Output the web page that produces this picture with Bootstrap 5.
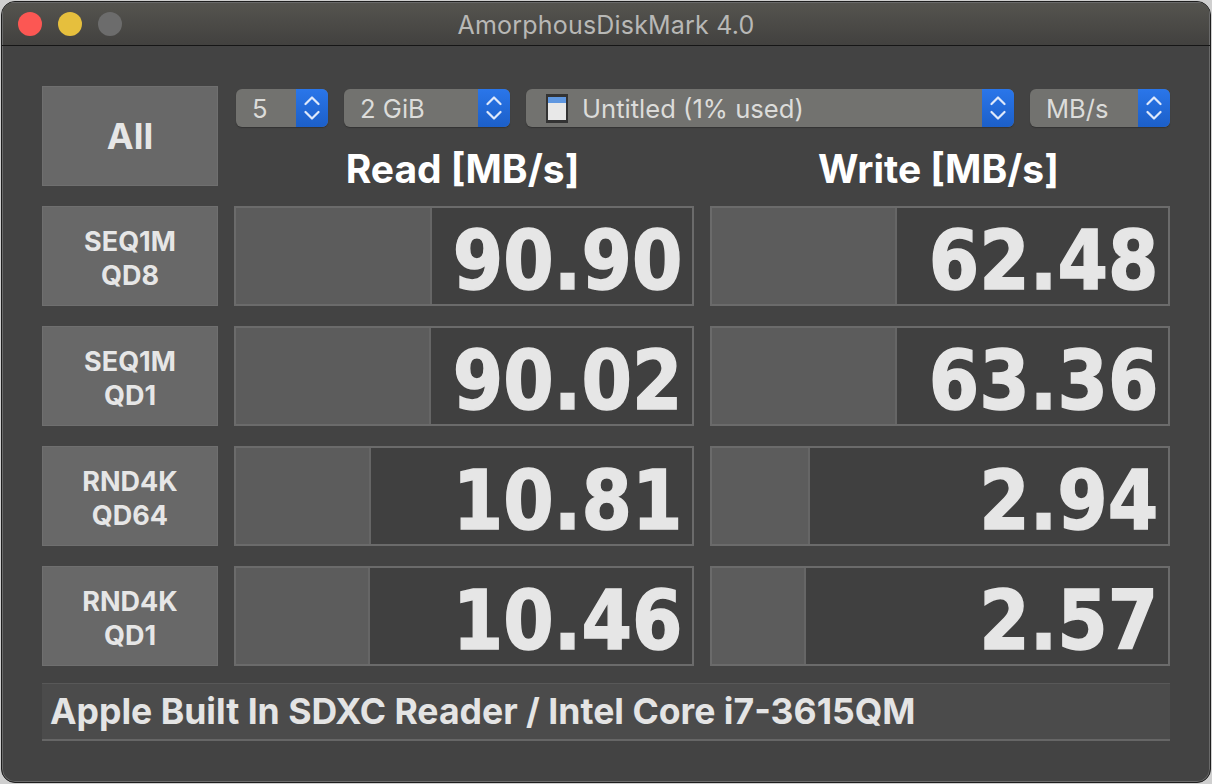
<!DOCTYPE html>
<html lang="en">
<head>
  <meta charset="UTF-8" />
  <title>AmorphousDiskMark 4.0</title>
  <meta name="viewport" content="width=device-width, initial-scale=1" />
  <link href="https://cdn.jsdelivr.net/npm/bootstrap@5.3.0/dist/css/bootstrap.min.css" rel="stylesheet" />
  <style>
    body {
      background: #cfcfcf;
      margin: 0;
      height: 784px;
      padding: 1px;
      font-family: Inter, "Liberation Sans", sans-serif;
      overflow: hidden;
    }
    .win {
      height: 782px;
      background: #434343;
      border: 1px solid #1e1e1e;
      border-radius: 14px;
      box-shadow: inset 0 0 0 1px #6a6a6a;
      overflow: hidden;
    }
    .titlebar {
      height: 44px;
      background: linear-gradient(#55544f, #42413f);
      border-bottom: 1px solid #161616;
      box-shadow: inset 0 1px 0 #6a6a6a, inset 1px 0 0 #6a6a6a, inset -1px 0 0 #6a6a6a;
      padding-left: 16px;
    }
    .dot {
      width: 24px;
      height: 24px;
      border-radius: 50%;
    }
    .dots { gap: 16px; }
    .title-text {
      color: #b8b8b6;
      font-size: 25px;
      letter-spacing: 0.2px;
      padding-top: 3px;
    }
    .content {
      padding: 40px 40px 0 40px;
    }
    .side-col { width: 176px; }
    .head-col { width: 936px; }
    .cellbtn {
      background: #686868;
      border: 1px solid #6f6f6f;
      color: #e6e6e6;
      font-weight: 700;
      line-height: 34px;
      font-size: 27px;
      text-align: center;
      padding-top: 5px;
    }
    .all-btn {
      height: 100px;
      font-size: 36px;
      padding-top: 0;
    }
    .pick {
      height: 38px;
      background: #72726f;
      border-radius: 6px;
      color: #dcdcda;
      font-size: 25.6px;
      overflow: hidden;
      box-shadow: 0 1px 1px #333;
    }
    .pick-label { padding-left: 16px; }
    .pick-text { padding-top: 3px; }
    .sd-icon { margin-left: 19px; margin-right: 13px; }
    .arrows {
      width: 32px;
      background: linear-gradient(#2a76ea, #1c5fc8);
    }
    .pick1 { width: 92px; margin-left: 2px; }
    .pick2 { width: 166px; }
    .pick3 { width: 488px; }
    .pick4 { width: 140px; }
    .pick-row { gap: 16px; padding-top: 3px; }
    .head-row { gap: 16px; margin-top: 20px; height: 39px; }
    .head-text {
      width: 460px;
      color: #fff;
      font-size: 39px;
      font-weight: 700;
      line-height: 44px;
      text-align: center;
      padding-right: 3px;
    }
    .data-row {
      height: 100px;
      margin-top: 20px;
      gap: 16px;
    }
    .meter {
      width: 460px;
      background: #404040;
      border: 2px solid #6b6b6b;
    }
    .meter-fill {
      background: #5c5c5c;
      border-right: 2px solid #666;
    }
    .meter-val {
      color: #e6e6e6;
      font-family: "DejaVu Sans", sans-serif;
      font-size: 82px;
      font-weight: 700;
      line-height: 106px;
      height: 96px;
      min-width: 0;
      padding-right: 10px;
      white-space: nowrap;
      -webkit-text-stroke: 1.5px #e6e6e6;
    }
    .meter-num {
      transform: scaleX(0.885);
      transform-origin: right center;
    }
    .foot-bar {
      height: 58px;
      margin-top: 17px;
      background: #4b4b4b;
      border-top: 1px solid #585858;
      border-bottom: 2px solid #666;
      color: #e4e4e4;
      font-size: 35.6px;
      font-weight: 700;
      line-height: 56px;
      padding-left: 8px;
      width: 1128px;
    }
  </style>
</head>
<body>
  <div class="win">
    <div class="titlebar d-flex align-items-center position-relative">
      <div class="d-flex dots">
        <div class="dot" style="background:#fc5753"></div>
        <div class="dot" style="background:#e6bf3d"></div>
        <div class="dot" style="background:#6c6c6c"></div>
      </div>
      <div class="title-text position-absolute top-50 start-50 translate-middle text-nowrap">AmorphousDiskMark 4.0</div>
    </div>
    <div class="content">
      <div class="d-flex gap-3">
        <div class="side-col cellbtn all-btn d-flex align-items-center justify-content-center">All</div>
        <div class="head-col">
          <div class="d-flex pick-row">
            <div class="pick pick1 d-flex justify-content-between align-items-center">
              <span class="pick-label pick-text">5</span>
              <span class="arrows h-100 d-flex align-items-center justify-content-center">
                <svg width="16" height="30" viewBox="0 0 16 30" fill="none" stroke="#dfe9fb" stroke-width="2.2" stroke-linecap="round" stroke-linejoin="round"><path d="M1.5 11 8 4.5 14.5 11M1.5 19 8 25.5 14.5 19"/></svg>
              </span>
            </div>
            <div class="pick pick2 d-flex justify-content-between align-items-center">
              <span class="pick-label pick-text">2 GiB</span>
              <span class="arrows h-100 d-flex align-items-center justify-content-center">
                <svg width="16" height="30" viewBox="0 0 16 30" fill="none" stroke="#dfe9fb" stroke-width="2.2" stroke-linecap="round" stroke-linejoin="round"><path d="M1.5 11 8 4.5 14.5 11M1.5 19 8 25.5 14.5 19"/></svg>
              </span>
            </div>
            <div class="pick pick3 d-flex justify-content-between align-items-center">
              <span class="d-flex align-items-center">
                <svg class="sd-icon" width="24" height="31" viewBox="0 0 24 31">
                  <path d="M1 1h22v29H1z" fill="#333"/>
                  <rect x="3" y="4" width="18" height="6" fill="#5f97e0"/>
                  <rect x="3" y="10" width="18" height="17" fill="#e8e8e8"/>
                </svg>
                <span class="pick-text">Untitled (1% used)</span>
              </span>
              <span class="arrows h-100 d-flex align-items-center justify-content-center">
                <svg width="16" height="30" viewBox="0 0 16 30" fill="none" stroke="#dfe9fb" stroke-width="2.2" stroke-linecap="round" stroke-linejoin="round"><path d="M1.5 11 8 4.5 14.5 11M1.5 19 8 25.5 14.5 19"/></svg>
              </span>
            </div>
            <div class="pick pick4 d-flex justify-content-between align-items-center">
              <span class="pick-label pick-text">MB/s</span>
              <span class="arrows h-100 d-flex align-items-center justify-content-center">
                <svg width="16" height="30" viewBox="0 0 16 30" fill="none" stroke="#dfe9fb" stroke-width="2.2" stroke-linecap="round" stroke-linejoin="round"><path d="M1.5 11 8 4.5 14.5 11M1.5 19 8 25.5 14.5 19"/></svg>
              </span>
            </div>
          </div>
          <div class="d-flex head-row">
            <div class="head-text">Read [MB/s]</div>
            <div class="head-text">Write [MB/s]</div>
          </div>
        </div>
      </div>

      <div id="rows"></div>

      <div class="foot-bar text-nowrap">Apple Built In SDXC Reader / Intel Core i7-3615QM</div>
    </div>
  </div>

  <script src="https://cdn.jsdelivr.net/npm/bootstrap@5.3.0/dist/js/bootstrap.bundle.min.js"></script>
  <script>
    const results = [
      { top: 'SEQ1M', bottom: 'QD8', read: '90.90', readBar: 196, write: '62.48', writeBar: 185 },
      { top: 'SEQ1M', bottom: 'QD1', read: '90.02', readBar: 195, write: '63.36', writeBar: 185 },
      { top: 'RND4K', bottom: 'QD64', read: '10.81', readBar: 135, write: '2.94', writeBar: 98 },
      { top: 'RND4K', bottom: 'QD1', read: '10.46', readBar: 134, write: '2.57', writeBar: 94 }
    ];

    const meter = (value, width) => `
      <div class="meter d-flex">
        <div class="meter-fill flex-shrink-0" style="width:${width}px"></div>
        <div class="meter-val flex-grow-1 d-flex justify-content-end"><span class="meter-num flex-shrink-0">${value}</span></div>
      </div>`;

    document.getElementById('rows').innerHTML = results.map(r => `
      <div class="d-flex data-row">
        <div class="side-col cellbtn d-flex flex-column justify-content-center">
          <div>${r.top}</div><div>${r.bottom}</div>
        </div>
        ${meter(r.read, r.readBar)}
        ${meter(r.write, r.writeBar)}
      </div>`).join('');
  </script>
</body>
</html>
